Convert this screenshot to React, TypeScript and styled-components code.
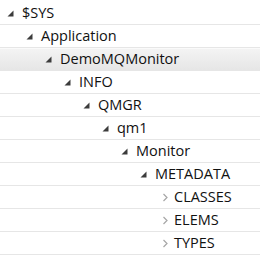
import React, { FC } from "react"
import styled, { createGlobalStyle } from "styled-components"

const GlobalStyle = createGlobalStyle`
  html, body {
    margin: 0;
    padding: 0;
    background: #ffffff;
  }
  body {
    font-family: "Open Sans", "Noto Sans", "Liberation Sans", sans-serif;
  }
`

const Tree = styled.ul`
  list-style: none;
  margin: 0;
  padding: 2px 0 0 0;
  width: 260px;
  height: 256px;
  overflow: hidden;
`

const Row = styled.li<{ $level: number; $selected?: boolean }>`
  display: flex;
  align-items: center;
  height: 22px;
  border-bottom: 1px solid #e6e6e6;
  padding-left: ${ (p) => 7 + p.$level * 19 }px;
  background: ${ (p) => p.$selected ? "linear-gradient(#f4f4f4, #e6e6e6)" : "transparent" };
  box-shadow: ${ (p) => p.$selected ? "inset 0 1px 0 #fafafa" : "none" };
`

const Toggle = styled.span`
  width: 15px;
  height: 22px;
  display: flex;
  align-items: center;
  justify-content: flex-start;
  flex-shrink: 0;
`

const Label = styled.span`
  font-size: 14.5px;
  color: #111;
  white-space: nowrap;
  line-height: 22px;
`

// filled "expanded" triangle, like the Windows explorer tree
const Expanded: FC = () => (
  <svg width="7" height="7" viewBox="0 0 7 7" style={ { marginTop: 1 } }>
    <path d="M6.5 0.5 L6.5 6.5 L0.5 6.5 Z" fill="#3c3c3c" />
  </svg>
)

const Collapsed: FC = () => (
  <svg width="8" height="9" viewBox="0 0 8 9" style={ { marginLeft: 3 } }>
    <path d="M1.5 1 L5 4.5 L1.5 8" fill="none" stroke="#a6a6a6" strokeWidth="1.2" />
  </svg>
)

type Node = { level: number; label: string; open: boolean; selected?: boolean }

const nodes: Node[] = [
  { level: 0, label: "$SYS", open: true },
  { level: 1, label: "Application", open: true },
  { level: 2, label: "DemoMQMonitor", open: true, selected: true },
  { level: 3, label: "INFO", open: true },
  { level: 4, label: "QMGR", open: true },
  { level: 5, label: "qm1", open: true },
  { level: 6, label: "Monitor", open: true },
  { level: 7, label: "METADATA", open: true },
  { level: 8, label: "CLASSES", open: false },
  { level: 8, label: "ELEMS", open: false },
  { level: 8, label: "TYPES", open: false },
]

const App: FC = () => (
  <>
    <GlobalStyle />
    <Tree>
      { nodes.map((n) => (
        <Row key={ n.label } $level={ n.level } $selected={ n.selected }>
          <Toggle>{ n.open ? <Expanded /> : <Collapsed /> }</Toggle>
          <Label>{ n.label }</Label>
        </Row>
      )) }
    </Tree>
  </>
)
export default App
